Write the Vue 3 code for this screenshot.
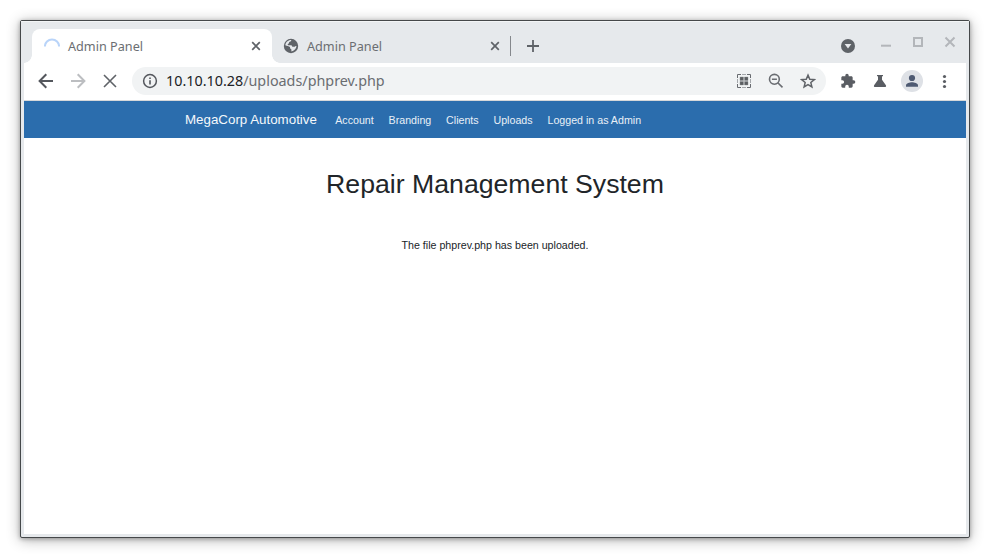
<script setup>
const links = ['Account', 'Branding', 'Clients', 'Uploads', 'Logged in as Admin']
</script>

<template>
  <div class="desktop">
    <div class="window">
      <header class="tabstrip">
        <div class="tab active">
          <svg class="favicon" viewBox="0 0 16 16"><path d="M.9 8.600a7.100 7.100 0 0 1 14.200 0" fill="none" stroke="#b9d4f9" stroke-width="2" /></svg>
          <span class="tab-title">Admin Panel</span>
          <svg class="tab-close" viewBox="0 0 10 10"><path d="M1.200 1.200l7.600 7.600M8.800 1.200L1.200 8.800" /></svg>
        </div>
        <div class="tab second">
          <svg class="globe" viewBox="0 0 16 16">
            <circle cx="8" cy="8" r="7.200" fill="#5f6368" />
            <path d="M8.300 2.100c-.2 1-.5 1.500-1.500 1.700-.8.2-.7.9-.8 1.500-.4.6-1.300.5-1.300 1.100 0 .7.8.8 1.500.8h1.900c.9 0 1 .9 1.200 1.600h1.800c.9 0 1.100-.6 1.600-.8l.8-.1c-.3 2.700-2.300 5.100-5.100 5.500v-1.600c0-.9-.8-.7-1.200-1.300-.3-.5.1-1.100-.3-1.500C5.900 8.200 4 8.100 2.300 7.300c.3-2.900 2.700-5.300 6-5.200z" fill="#e6e9ec" />
          </svg>
          <span class="tab-title">Admin Panel</span>
          <svg class="tab-close" viewBox="0 0 10 10"><path d="M1.200 1.200l7.600 7.600M8.800 1.200L1.200 8.800" /></svg>
        </div>
        <span class="separator"></span>
        <svg class="plus" viewBox="0 0 12 12"><path d="M6 0v12M0 6h12" stroke="#5f6368" stroke-width="1.800" /></svg>
        <div class="window-controls">
          <svg class="search-tabs" viewBox="0 0 14 14"><circle cx="7" cy="7" r="7" fill="#5f6368" /><path d="M3.600 5h6.800L7 9.500z" fill="#e8eaed" /></svg>
          <svg viewBox="0 0 12 12"><path d="M1 9.700h10" stroke="#b3b6ba" stroke-width="2" /></svg>
          <svg viewBox="0 0 12 12"><path d="M2 2h8v8H2z" fill="none" stroke="#b3b6ba" stroke-width="2" /></svg>
          <svg viewBox="0 0 12 12"><path d="M1.500 1.500l9 9M10.500 1.500l-9 9" stroke="#b3b6ba" stroke-width="2" /></svg>
        </div>
      </header>

      <div class="toolbar">
        <div class="navigation">
          <svg viewBox="0 0 16 16"><path d="M15 8H2M8.300 1.300L1.600 8l6.700 6.700" fill="none" stroke="#54575d" stroke-width="2" /></svg>
          <svg viewBox="0 0 16 16"><path d="M1 8h13M7.700 1.300L14.400 8l-6.700 6.700" fill="none" stroke="#bcbec1" stroke-width="2" /></svg>
          <svg viewBox="0 0 16 16"><path d="M2 2l12 12M14 2L2 14" stroke="#5f6368" stroke-width="1.600" /></svg>
        </div>
        <div class="omnibox">
          <svg class="info" viewBox="0 0 16 16"><circle cx="8" cy="8" r="6.400" fill="none" stroke="#54575d" stroke-width="1.500" /><path d="M8 7.200v4.300M8 4.500v1.600" stroke="#54575d" stroke-width="1.600" /></svg>
          <span class="url"><b>10.10.10.28</b>/uploads/phprev.php</span>
          <div class="page-actions">
            <svg viewBox="0 0 16 16">
              <path d="M1.500 5V1.500H5M11 1.500h3.500V5M14.500 11v3.500H11M5 14.500H1.500V11" fill="none" stroke="#686b70" />
              <path d="M6 1.500h4M6 14.500h4M1.500 6v4M14.500 6v4" fill="none" stroke="#a5a8ac" />
              <path d="M4 4h3.500v3.500H4zM8.500 4H12v3.500H8.500zM4 8.500h3.500V12H4zM8.500 8.500H12V12H8.500z" fill="#5b5e62" stroke="#8a8d91" stroke-width=".4" />
            </svg>
            <svg viewBox="0 0 16 16"><g fill="none" stroke="#6a6d72" stroke-width="1.600"><circle cx="6.400" cy="6.300" r="4.900" /><path d="M3.900 6.300h5M9.800 9.700l4.700 4.700" /></g></svg>
            <svg viewBox="0 0 16 16"><path d="M8 2.100l1.750 4.100 4.550.4-3.450 2.950 1.050 4.450L8 11.650 4.100 14l1.050-4.450L1.700 6.600l4.550-.4z" fill="none" stroke="#606368" stroke-width="1.500" /></svg>
          </div>
        </div>
        <div class="extensions">
          <svg viewBox="0 0 24 24"><path d="M20.500 11H19V7c0-1.100-.9-2-2-2h-4V3.500a2.500 2.500 0 0 0-5 0V5H4c-1.100 0-1.990.9-1.990 2v3.800H3.500a2.700 2.700 0 0 1 0 5.400H2V20c0 1.100.9 2 2 2h3.800v-1.500a2.700 2.700 0 0 1 5.400 0V22H17c1.100 0 2-.9 2-2v-4h1.500a2.500 2.500 0 0 0 0-5z" /></svg>
          <svg viewBox="0 0 16 16"><path d="M5 2h6v1.300h-1v3.400l3.900 5.500c.6.900 0 1.800-1.100 1.800H3.200c-1.100 0-1.700-.9-1.100-1.800L6 6.700V3.300H5z" /></svg>
          <span class="avatar"><svg viewBox="0 0 16 16"><circle cx="8" cy="5" r="3.100" /><path d="M2 13.800v-1.500C2 10.100 5.800 9.200 8 9.200s6 .9 6 3.100v1.500z" /></svg></span>
          <svg viewBox="0 0 16 16"><circle cx="8.500" cy="3.500" r="1.600" /><circle cx="8.500" cy="8.500" r="1.600" /><circle cx="8.500" cy="13.500" r="1.600" /></svg>
        </div>
      </div>

      <main class="page">
        <nav class="navbar">
          <span class="brand">MegaCorp Automotive</span>
          <span v-for="link in links" :key="link" class="nav-link">{{ link }}</span>
        </nav>
        <h1>Repair Management System</h1>
        <p>The file phprev.php has been uploaded.</p>
      </main>
    </div>
  </div>
</template>

<style>
body { background: #fff; }
</style>

<style scoped>
* { box-sizing: border-box; }
svg { display: block; flex: none; }
.desktop { height: 558px; padding: 20px; overflow: hidden; background: #fff; }
.window {
  width: 950px;
  height: 518px;
  display: flex;
  flex-direction: column;
  border: 1px solid #45484a;
  border-radius: 2px;
  background: #e6e9ec;
  padding: 0 3px 3px;
  box-shadow: 0 2px 14px rgba(0, 0, 0, .3), 0 1px 4px rgba(0, 0, 0, .3);
}
.tabstrip {
  height: 42px;
  flex: none;
  display: flex;
  align-items: flex-end;
  box-shadow: inset 0 1px #f3f5f6;
  margin: 0 -3px;
  padding: 0 3px 0 11px;
}
.tab {
  height: 34px;
  display: flex;
  align-items: center;
  font: 12.670px/18px "Noto Sans", sans-serif;
  color: #6b6e72;
}
.active {
  position: relative;
  width: 240px;
  padding: 0 11px 0 12px;
  background: #fff;
  border-radius: 8px 8px 0 0;
}
.active::before, .active::after {
  content: "";
  position: absolute;
  bottom: 0;
  width: 8px;
  height: 8px;
}
.active::before { left: -8px; background: radial-gradient(circle at 0 0, transparent 7.500px, #fff 8px); }
.active::after { right: -8px; background: radial-gradient(circle at 100% 0, transparent 7.500px, #fff 8px); }
.second { width: 238px; padding: 0 10px 0 11px; }
.favicon, .globe { width: 16px; height: 16px; }
.tab-title { flex: 1; margin-left: 8px; }
.tab-close { width: 10px; height: 10px; }
.tab-close path { stroke: #5f6368; stroke-width: 1.700; }
.separator { width: 1px; height: 20px; margin-bottom: 7px; background: #85888c; }
.plus { width: 12px; height: 12px; margin: 0 0 11px 16px; }
.window-controls { margin-left: auto; display: flex; gap: 20px; padding: 0 10px 15px 0; }
.window-controls svg { width: 12px; height: 12px; }
.window-controls .search-tabs { width: 14px; height: 14px; margin: 3px 5px -5px 0; }
.toolbar {
  height: 38px;
  flex: none;
  display: flex;
  align-items: flex-start;
  padding: 4px 14px 0;
  background: #fff;
  border-bottom: 1px solid #d6d8da;
}
.navigation { display: flex; gap: 16px; padding-top: 6px; }
.navigation svg { width: 16px; height: 16px; }
.omnibox {
  width: 694px;
  height: 28px;
  margin-left: 14px;
  padding: 0 10px;
  display: flex;
  align-items: center;
  border-radius: 14px;
  background: #f1f3f4;
}
.info { width: 16px; height: 16px; }
.url { flex: 1; margin-left: 8px; font: 14.350px/20px "Noto Sans", sans-serif; color: #6a6d71; }
.url b { font-weight: 400; color: #202124; }
.page-actions { display: flex; gap: 16px; }
.page-actions svg { width: 16px; height: 16px; }
.extensions { display: flex; align-items: center; gap: 16px; height: 28px; margin-left: 14px; }
.extensions svg { width: 16px; height: 16px; fill: #5a5d63; }
.avatar { width: 22px; height: 22px; margin: 0 -3px; padding: 3px; border-radius: 50%; background: #dee1e6; }
.extensions .avatar svg { fill: #4e5a72; }
.page {
  flex: 1;
  background: #fff;
  font: 10.667px/16px "Liberation Sans", Arial, sans-serif;
  color: #212529;
  text-align: center;
}
.navbar {
  height: 37px;
  display: flex;
  align-items: center;
  gap: 14.850px;
  padding-left: 161px;
  background: #2b6dad;
  color: #e9f0f7;
}
.brand { font-size: 13.333px; margin-right: 3.500px; color: #f4f8fb; }
.nav-link { padding-top: 1px; }
h1 { margin: 30px 0 0; font-size: 26.667px; line-height: 32px; font-weight: 400; }
p { margin: 37px 0 0; }
</style>
